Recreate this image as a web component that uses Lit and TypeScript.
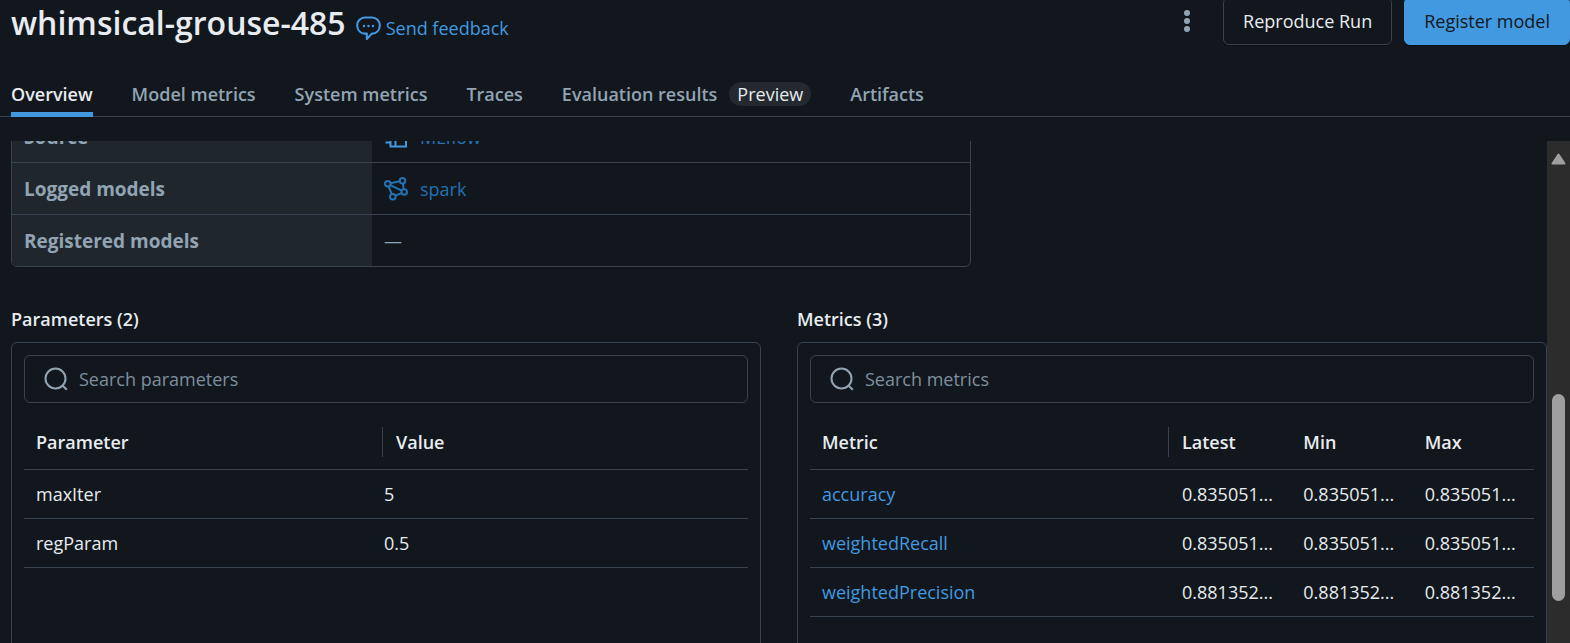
import { LitElement, html, css, svg } from "lit";
import { customElement } from "lit/decorators.js";

const feedbackIcon = svg`<svg class="icon" width="25" height="25" viewBox="0 0 24 24" fill="none" stroke="currentColor" stroke-width="2" stroke-linejoin="round" aria-hidden="true">
  <path d="M8.5 1.5h7a7.3 7.3 0 0 1 7.3 7.3v.8a7.3 7.3 0 0 1-7.3 7.3h-.3L10.4 22v-5.1H8.5a7.3 7.3 0 0 1-7.3-7.3v-.8a7.3 7.3 0 0 1 7.3-7.3z"/>
  <g fill="currentColor" stroke="none"><circle cx="7.7" cy="9.5" r="1.2"/><circle cx="12" cy="9.5" r="1.2"/><circle cx="16.3" cy="9.5" r="1.2"/></g>
</svg>`;

const notebookIcon = svg`<svg class="icon" width="24" height="24" viewBox="0 0 24 24" fill="none" stroke="currentColor" stroke-width="2" aria-hidden="true">
  <path d="M6.5 2H22v19.5H6.5zM11.5 2v19.5M1.5 6h5M1.5 12h5M1.5 17.5h5"/>
</svg>`;

const modelIcon = svg`<svg class="icon" width="24" height="24" viewBox="0 0 24 24" fill="none" stroke="currentColor" stroke-width="2" aria-hidden="true">
  <circle cx="3.8" cy="6.8" r="2.8"/><circle cx="18.5" cy="3.8" r="2.8"/><circle cx="20.2" cy="15" r="2.8"/><circle cx="8.8" cy="19.8" r="2.8"/>
  <path d="M6.5 6.2l9.2-1.9M6.3 8.2l11.4 5.5M4.6 9.5l3.2 7.6M11.4 18.7l6.2-2.6M18.9 6.6l.8 5.6"/>
</svg>`;

const searchIcon = svg`<svg class="icon" width="24" height="24" viewBox="0 0 24 24" fill="none" stroke="currentColor" stroke-width="2" aria-hidden="true">
  <circle cx="11.5" cy="11.5" r="10"/><path d="M18.2 18.2l4.6 4.6"/>
</svg>`;

const parameters = [
  ["maxIter", "5"],
  ["regParam", "0.5"],
];

const metrics = [
  ["accuracy", "0.835051..."],
  ["weightedRecall", "0.835051..."],
  ["weightedPrecision", "0.881352..."],
];

const tabs = [
  { label: "Overview", active: true },
  { label: "Model metrics" },
  { label: "System metrics" },
  { label: "Traces" },
  { label: "Evaluation results", badge: "Preview" },
  { label: "Artifacts" },
];

@customElement("app-root")
export class AppRoot extends LitElement {
  static styles = css`
    :host {
      display: flex;
      flex-direction: column;
      height: 100vh;
      overflow: hidden;
      background: #11171c;
      color: #e8ecf0;
      font: 18px/24px "Segoe UI", "Open Sans", sans-serif;
    }
    * { box-sizing: border-box; }
    a { color: #4299e0; text-decoration: none; }
    button { font: inherit; cursor: pointer; }
    .icon { display: block; flex: none; }
    .header {
      flex: none;
      display: flex;
      align-items: center;
      margin-top: -3px;
      padding-left: 11px;
      height: 48px;
    }
    h1 { margin: 4px 0 0; font-size: 32px; line-height: 44px; font-weight: 600; }
    .feedback { display: flex; align-items: center; gap: 5px; margin: 14px auto 0 10px; }
    .more {
      display: grid;
      place-items: center;
      width: 48px;
      height: 48px;
      margin-right: 12px;
      padding: 0;
      border: 0;
      background: none;
      color: #92a4b3;
    }
    .btn {
      height: 48px;
      padding: 0 19px;
      border: 1px solid #37444f;
      border-radius: 6px;
      background: #11171c;
      color: #e8ecf0;
      box-shadow: 0 1px 0 rgba(0, 0, 0, 0.3);
    }
    .primary { margin-left: 12px; border-color: #4299e0; background: #4299e0; color: #11171c; }
    .tabs {
      flex: none;
      display: flex;
      gap: 39px;
      margin-top: 30px;
      padding-left: 11px;
      height: 42px;
      border-bottom: 1px solid #37444f;
    }
    .tab {
      display: flex;
      align-items: center;
      gap: 12px;
      height: 42px;
      padding: 0 0 4px;
      border: 0;
      background: none;
      color: #92a4b3;
      font-weight: 600;
    }
    .tab.active { color: #e8ecf0; box-shadow: inset 0 -5px #4299e0; }
    .badge { padding: 0 8px; border-radius: 12px; background: #23292e; color: #e8ecf0; font-weight: 400; }
    .body { flex: 1; min-height: 0; display: flex; margin-top: 24px; }
    .content { flex: 1; min-width: 0; overflow: hidden; padding-left: 11px; }
    .details {
      width: 960px;
      max-width: 100%;
      margin-top: -31px;
      border: 1px solid #37444f;
      border-radius: 6px;
      border-spacing: 0;
      overflow: hidden;
      table-layout: fixed;
    }
    .details th, .details td { height: 52px; padding: 0 12px; border-bottom: 1px solid #37444f; text-align: left; }
    .details tr:last-child > * { height: 51px; border-bottom: 0; }
    .details th { width: 360px; background: #1f272d; color: #92a4b3; font-size: 19px; font-weight: 700; }
    .details a { display: flex; align-items: center; gap: 12px; color: #2272b4; }
    .bright { color: #4299e0; }
    .dash { color: #92a4b3; }
    .panels { display: grid; grid-template-columns: 1fr 1fr; gap: 36px; margin-top: 40px; }
    h2 { margin: 0 0 11px; font-size: 18px; line-height: 24px; font-weight: 600; }
    .card { height: 400px; padding: 12px; border: 1px solid #37444f; border-radius: 6px; }
    .search {
      display: flex;
      align-items: center;
      gap: 11px;
      height: 48px;
      padding: 0 19px;
      border: 1px solid #37444f;
      border-radius: 6px;
      color: #92a4b3;
    }
    .search input { flex: 1; min-width: 0; padding: 0; border: 0; outline: 0; background: none; color: #e8ecf0; font: inherit; }
    .search input::placeholder { color: #7d8f9e; opacity: 1; }
    .grid { width: 100%; margin-top: 12px; border-spacing: 0; table-layout: fixed; }
    .grid th, .grid td {
      height: 49px;
      padding: 0 12px;
      border-bottom: 1px solid #37444f;
      text-align: left;
      font-weight: 400;
      overflow: hidden;
      white-space: nowrap;
      text-overflow: ellipsis;
    }
    .grid thead th { height: 55px; font-weight: 600; }
    .grid .name { width: 360px; }
    .grid thead .name { padding-right: 1px; }
    .head { display: flex; align-items: center; height: 30px; border-right: 1px solid #37444f; }
    .params tbody td { padding-left: 0; }
    .scrollbar { flex: none; width: 23px; display: flex; flex-direction: column; align-items: center; padding-top: 12px; background: #2c2c2c; }
    .thumb { width: 13px; height: 207px; margin-top: 229px; border-radius: 7px; background: #9f9f9f; }
  `;

  render() {
    return html`
      <header class="header">
        <h1>whimsical-grouse-485</h1>
        <a class="feedback" href="#">${feedbackIcon}Send feedback</a>
        <button class="more" aria-label="More actions">
          <svg width="8" height="24" viewBox="0 0 8 24" fill="currentColor"><circle cx="4" cy="4" r="3"/><circle cx="4" cy="12" r="3"/><circle cx="4" cy="20" r="3"/></svg>
        </button>
        <button class="btn">Reproduce Run</button>
        <button class="btn primary">Register model</button>
      </header>
      <nav class="tabs" role="tablist">
        ${tabs.map((t) => html`<button role="tab" aria-selected=${t.active ? "true" : "false"} class="tab ${t.active ? "active" : ""}">${t.label}${t.badge ? html`<span class="badge">${t.badge}</span>` : ""}</button>`)}
      </nav>
      <div class="body">
        <main class="content">
          <table class="details">
            <tr><th scope="row">Source</th><td><a href="#"><span class="bright">${notebookIcon}</span>MLflow</a></td></tr>
            <tr><th scope="row">Logged models</th><td><a href="#">${modelIcon}spark</a></td></tr>
            <tr><th scope="row">Registered models</th><td><span class="dash">—</span></td></tr>
          </table>
          <div class="panels">
            <section>
              <h2>Parameters (2)</h2>
              <div class="card">
                <label class="search">${searchIcon}<input type="text" aria-label="Search parameters" placeholder="Search parameters"></label>
                <table class="grid params">
                  <thead><tr><th class="name"><div class="head">Parameter</div></th><th>Value</th></tr></thead>
                  <tbody>${parameters.map(([k, v]) => html`<tr><th scope="row">${k}</th><td>${v}</td></tr>`)}</tbody>
                </table>
              </div>
            </section>
            <section>
              <h2>Metrics (3)</h2>
              <div class="card">
                <label class="search">${searchIcon}<input type="text" aria-label="Search metrics" placeholder="Search metrics"></label>
                <table class="grid">
                  <thead><tr><th class="name"><div class="head">Metric</div></th><th>Latest</th><th>Min</th><th>Max</th></tr></thead>
                  <tbody>${metrics.map(([k, v]) => html`<tr><th scope="row"><a href="#">${k}</a></th><td>${v}</td><td>${v}</td><td>${v}</td></tr>`)}</tbody>
                </table>
              </div>
            </section>
          </div>
        </main>
        <div class="scrollbar" aria-hidden="true">
          <svg width="15" height="12" viewBox="0 0 15 12"><path d="M7.5 1.5L13.5 10.5H1.5z" fill="#9f9f9f" stroke="#9f9f9f" stroke-width="2" stroke-linejoin="round"/></svg>
          <div class="thumb"></div>
        </div>
      </div>
    `;
  }
}
